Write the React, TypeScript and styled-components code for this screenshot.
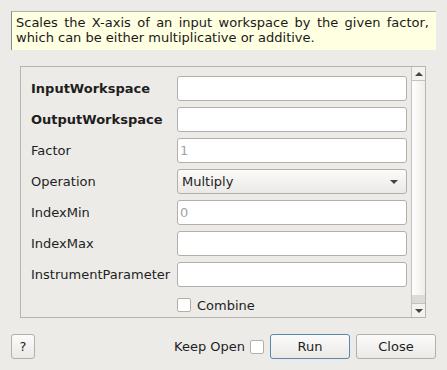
import { Fragment } from "react";
import styled, { createGlobalStyle } from "styled-components";

const Global = createGlobalStyle`
  html, body {
    margin: 0;
    padding: 0;
    background: #edebe8;
  }
  body {
    font-family: "DejaVu Sans", "Liberation Sans", sans-serif;
    font-size: 13px;
    color: #1e1e1e;
  }
`;

const Dialog = styled.div`
  width: 447px;
  height: 370px;
  box-sizing: border-box;
  padding: 11px 11px 0 11px;
  background: #edebe8;
  display: flex;
  flex-direction: column;
`;

const Description = styled.div`
  height: 39px;
  box-sizing: border-box;
  background: #ffffe1;
  border-top: 1px solid #b4b1ab;
  border-left: 1px solid #8c8a86;
  padding: 3px 7px 0 4px;
  line-height: 15px;
  text-align: justify;
  color: #1a1a1a;
`;

const Panel = styled.div`
  margin: 16px 10px 0 9px;
  height: 252px;
  box-sizing: border-box;
  border: 1px solid #b8b5b0;
  display: flex;
`;

const Form = styled.div`
  flex: 1;
  padding: 9px 4px 0 10px;
  display: grid;
  grid-template-columns: 146px 230px;
  grid-auto-rows: 25px;
  row-gap: 6px;
  align-items: center;
`;

const Label = styled.div<{ $bold?: boolean }>`
  font-weight: ${(p) => (p.$bold ? "bold" : "normal")};
  white-space: nowrap;
`;

const Field = styled.div`
  height: 25px;
  box-sizing: border-box;
  background: #ffffff;
  border: 1px solid #b3b0ab;
  border-radius: 3px;
  padding-left: 2px;
  line-height: 23px;
  color: #a3a3a3;
`;

const Combo = styled.div`
  height: 25px;
  box-sizing: border-box;
  border: 1px solid #b3b0ab;
  border-radius: 3px;
  background: linear-gradient(#fbfbfa, #ebe9e6);
  padding: 0 8px 0 4px;
  display: flex;
  align-items: center;
  justify-content: space-between;
`;

const Arrow = styled.span<{ $up?: boolean }>`
  width: 0;
  height: 0;
  border-left: 4px solid transparent;
  border-right: 4px solid transparent;
  ${(p) =>
    p.$up ? "border-bottom: 4px solid #444;" : "border-top: 4px solid #444;"}
`;

const CheckRow = styled.label`
  display: flex;
  align-items: center;
  gap: 6px;
  margin-top: -1px;
`;

const Box = styled.span`
  width: 14px;
  height: 14px;
  box-sizing: border-box;
  background: #ffffff;
  border: 1px solid #b3b0ab;
  border-radius: 2px;
`;

const ScrollBar = styled.div`
  width: 14px;
  border-left: 1px solid #c5c2bd;
  display: flex;
  flex-direction: column;
`;

const ScrollButton = styled.div<{ $top?: boolean }>`
  height: 13px;
  display: flex;
  align-items: center;
  justify-content: center;
  background: #f3f2f0;
  ${(p) =>
    p.$top
      ? "border-bottom: 1px solid #c5c2bd;"
      : "border-top: 1px solid #c5c2bd;"}
`;

const Track = styled.div`
  flex: 1;
  background: linear-gradient(90deg, #ffffff, #eeedeb);
`;

const TrackRest = styled.div`
  height: 8px;
  background: #dddbd8;
`;

const Footer = styled.div`
  margin-top: 16px;
  display: flex;
  align-items: center;
  gap: 6px;
`;

const Button = styled.button<{ $primary?: boolean; $w?: number }>`
  height: 25px;
  width: ${(p) => p.$w ?? 80}px;
  box-sizing: border-box;
  border: 1px solid ${(p) => (p.$primary ? "#5a87ad" : "#b3b0ab")};
  border-radius: 3px;
  background: linear-gradient(#fbfbfa, #ebe9e6);
  font-family: "DejaVu Sans", "Liberation Sans", sans-serif;
  font-size: 13px;
  color: #1e1e1e;
  padding: 0;
`;

const KeepOpen = styled(CheckRow)`
  margin: 0 0 0 auto;
  gap: 5px;
`;

const rows: { label: string; bold?: boolean; value?: string }[] = [
  { label: "InputWorkspace", bold: true },
  { label: "OutputWorkspace", bold: true },
  { label: "Factor", value: "1" },
];

const rows2: { label: string; value?: string }[] = [
  { label: "IndexMin", value: "0" },
  { label: "IndexMax" },
  { label: "InstrumentParameter" },
];

export default function App() {
  return (
    <Dialog>
      <Global />
      <Description>
        Scales the X-axis of an input workspace by the given factor, which can
        be either multiplicative or additive.
      </Description>
      <Panel>
        <Form>
          {rows.map((r) => (
            <Fragment key={r.label}>
              <Label $bold={r.bold}>{r.label}</Label>
              <Field>{r.value}</Field>
            </Fragment>
          ))}
          <Label>Operation</Label>
          <Combo>
            <span>Multiply</span>
            <Arrow />
          </Combo>
          {rows2.map((r) => (
            <Fragment key={r.label}>
              <Label>{r.label}</Label>
              <Field>{r.value}</Field>
            </Fragment>
          ))}
          <span />
          <CheckRow>
            <Box />
            Combine
          </CheckRow>
        </Form>
        <ScrollBar>
          <ScrollButton $top>
            <Arrow $up />
          </ScrollButton>
          <Track />
          <TrackRest />
          <ScrollButton>
            <Arrow />
          </ScrollButton>
        </ScrollBar>
      </Panel>
      <Footer>
        <Button $w={24}>?</Button>
        <KeepOpen>
          Keep Open
          <Box />
        </KeepOpen>
        <Button $primary>Run</Button>
        <Button>Close</Button>
      </Footer>
    </Dialog>
  );
}
